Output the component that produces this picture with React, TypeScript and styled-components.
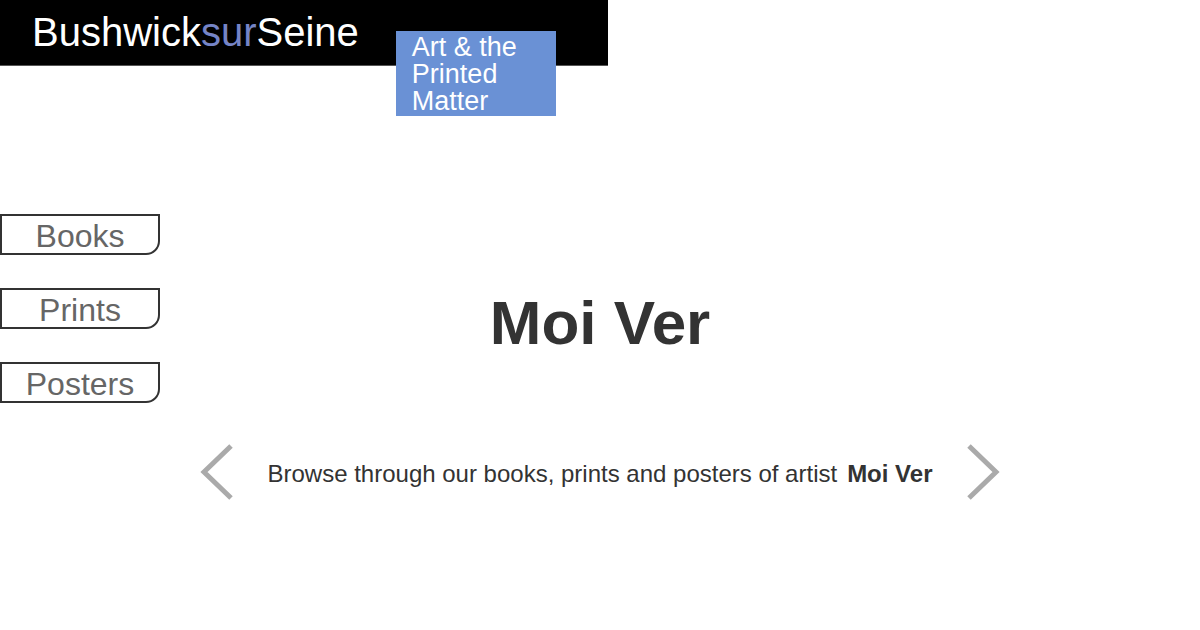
import styled, { createGlobalStyle } from "styled-components";

const GlobalStyle = createGlobalStyle`
  html, body {
    margin: 0;
    padding: 0;
    background: #fff;
    font-family: "Liberation Sans", Arial, sans-serif;
  }
`;

const Page = styled.div`
  width: 1200px;
  height: 630px;
  overflow: hidden;
`;

const Header = styled.header`
  display: flex;
  align-items: flex-start;
  width: 608px;
  height: 66px;
  background: #000;
  border-bottom: 1px solid #555;
  box-sizing: border-box;
`;

const Logo = styled.h1`
  margin: 0;
  padding: 8px 0 0 32px;
  font-size: 40px;
  font-weight: 400;
  line-height: 48px;
  color: #fff;
  white-space: nowrap;
  span {
    color: #7584c6;
  }
`;

const Tagline = styled.div`
  margin: 31px 0 0 37px;
  width: 160px;
  height: 85px;
  padding: 3px 0 0 16px;
  box-sizing: border-box;
  background: #6a91d5;
  color: #fff;
  font-size: 27px;
  line-height: 27px;
  position: relative;
  z-index: 1;
`;

const Main = styled.div`
  display: grid;
  grid-template-columns: 200px 800px 200px;
`;

const Sidebar = styled.nav`
  display: flex;
  flex-direction: column;
  gap: 33px;
  padding-top: 148px;
`;

const NavButton = styled.a`
  display: flex;
  align-items: center;
  justify-content: center;
  width: 160px;
  height: 41px;
  padding-top: 3px;
  box-sizing: border-box;
  border: 2px solid #333;
  border-bottom-right-radius: 14px;
  color: #666;
  font-size: 32px;
  line-height: 32px;
  text-decoration: none;
  cursor: pointer;
`;

const Content = styled.section`
  display: flex;
  flex-direction: column;
  align-items: center;
  padding-top: 225px;
`;

const Title = styled.h2`
  margin: 0;
  font-size: 62px;
  font-weight: 700;
  line-height: 64px;
  color: #333;
`;

const BrowseRow = styled.div`
  margin-top: 89px;
  width: 100%;
  display: flex;
  align-items: center;
  justify-content: space-between;
`;

const Arrow = styled.button`
  display: flex;
  padding: 0;
  border: none;
  background: none;
  cursor: pointer;
`;

const BrowseText = styled.p`
  margin: 0;
  padding-top: 3px;
  font-size: 24px;
  color: #333;
  strong {
    margin-left: 10px;
    font-weight: 700;
  }
`;

function Chevron({ dir }: { dir: "left" | "right" }) {
  const points = dir === "left" ? "31,2 4,28 31,54" : "3,2 30,28 3,54";
  return (
    <svg width="34" height="56" viewBox="0 0 34 56">
      <polyline points={points} fill="none" stroke="#aaa" strokeWidth="5" />
    </svg>
  );
}

export default function App() {
  return (
    <Page>
      <GlobalStyle />
      <Header>
        <Logo>
          Bushwick<span>sur</span>Seine
        </Logo>
        <Tagline>
          Art &amp; the
          <br />
          Printed
          <br />
          Matter
        </Tagline>
      </Header>
      <Main>
        <Sidebar>
          <NavButton>Books</NavButton>
          <NavButton>Prints</NavButton>
          <NavButton>Posters</NavButton>
        </Sidebar>
        <Content>
          <Title>Moi Ver</Title>
          <BrowseRow>
            <Arrow aria-label="previous">
              <Chevron dir="left" />
            </Arrow>
            <BrowseText>
              Browse through our books, prints and posters of artist
              <strong>Moi Ver</strong>
            </BrowseText>
            <Arrow aria-label="next">
              <Chevron dir="right" />
            </Arrow>
          </BrowseRow>
        </Content>
      </Main>
    </Page>
  );
}
